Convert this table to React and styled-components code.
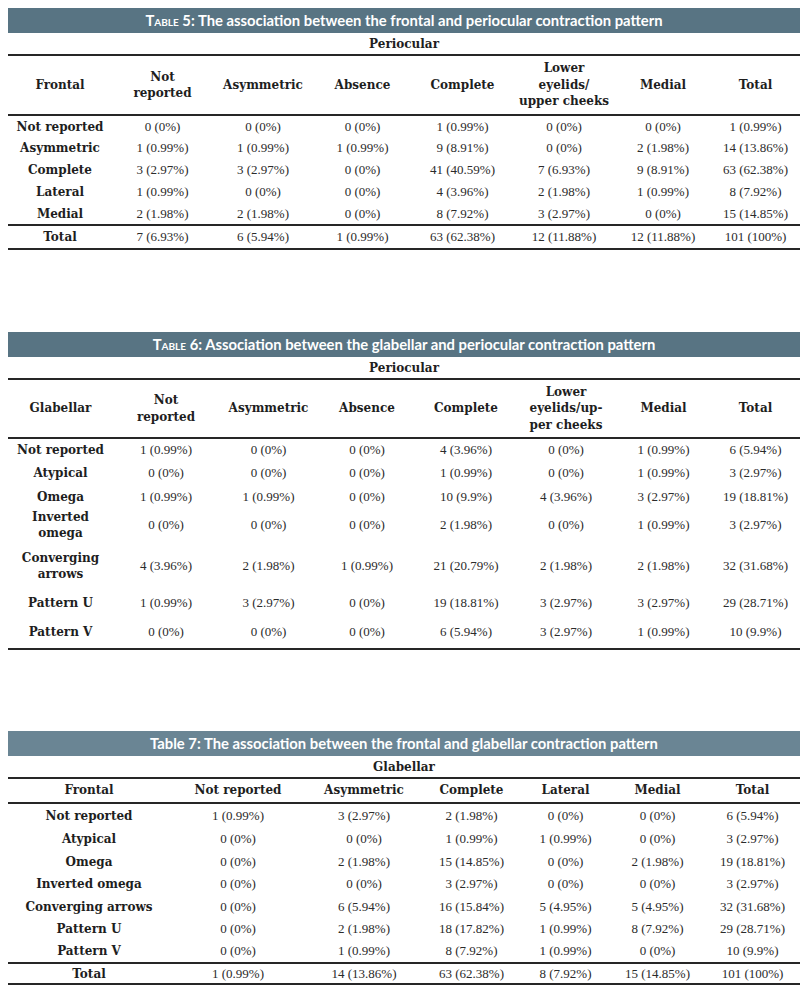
import React from "react";
import styled, { createGlobalStyle } from "styled-components";

const GlobalStyle = createGlobalStyle`
  body {
    margin: 0;
    background: #ffffff;
  }
`;

const Page = styled.div`
  width: 792px;
  padding: 8px 6px 0 8px;
  display: flex;
  flex-direction: column;
`;

const Block = styled.section`
  margin-top: ${(props) => props.$gap}px;
`;

const TitleBar = styled.div`
  height: 25px;
  line-height: 25px;
  background-color: ${(props) => props.$bg};
  color: #ffffff;
  font-family: Lato, "Open Sans", sans-serif;
  font-weight: 700;
  font-size: 14.8px;
  text-align: center;
  white-space: nowrap;
`;

const Lead = styled.span`
  font-variant: ${(props) => (props.$caps ? "small-caps" : "normal")};
`;

const Table = styled.table`
  width: 792px;
  border-collapse: collapse;
  table-layout: fixed;
  color: #1e1e1e;
`;

const GroupCell = styled.th`
  height: 21px;
  padding: 0;
  font-family: "DejaVu Serif", serif;
  font-weight: 700;
  font-size: 12px;
  text-align: center;
  border-bottom: 2px solid #262626;
`;

const HeadCell = styled.th`
  height: ${(props) => props.$h}px;
  padding: 0;
  font-family: "DejaVu Serif", serif;
  font-weight: 700;
  font-size: 12px;
  line-height: 16.5px;
  text-align: center;
  vertical-align: middle;
  border-bottom: 2px solid #262626;
`;

const Row = styled.tr`
  height: ${(props) => props.$h}px;
  border-top: ${(props) => (props.$total ? "2px solid #262626" : "none")};
  border-bottom: ${(props) => (props.$last ? "2px solid #262626" : "none")};
`;

const Label = styled.th`
  padding: 0;
  font-family: "DejaVu Serif", serif;
  font-weight: 700;
  font-size: 12px;
  line-height: 16px;
  text-align: center;
  vertical-align: middle;
`;

const Cell = styled.td`
  padding: 0;
  font-family: "Liberation Serif", serif;
  font-size: 13px;
  color: #2b2b2b;
  text-align: center;
  vertical-align: middle;
  white-space: nowrap;
`;

const tables = [
  {
    gap: 0,
    bg: "#587483",
    caps: true,
    lead: "Table 5:",
    title: "The association between the frontal and periocular contraction pattern",
    group: "Periocular",
    widths: [104, 101, 100, 99, 101, 102, 96, 89],
    headHeight: 58,
    head: [
      ["Frontal"],
      ["Not", "reported"],
      ["Asymmetric"],
      ["Absence"],
      ["Complete"],
      ["Lower", "eyelids/", "upper cheeks"],
      ["Medial"],
      ["Total"],
    ],
    rows: [
      { h: 22, label: ["Not reported"], cells: ["0 (0%)", "0 (0%)", "0 (0%)", "1 (0.99%)", "0 (0%)", "0 (0%)", "1 (0.99%)"] },
      { h: 22, label: ["Asymmetric"], cells: ["1 (0.99%)", "1 (0.99%)", "1 (0.99%)", "9 (8.91%)", "0 (0%)", "2 (1.98%)", "14 (13.86%)"] },
      { h: 22, label: ["Complete"], cells: ["3 (2.97%)", "3 (2.97%)", "0 (0%)", "41 (40.59%)", "7 (6.93%)", "9 (8.91%)", "63 (62.38%)"] },
      { h: 22, label: ["Lateral"], cells: ["1 (0.99%)", "0 (0%)", "0 (0%)", "4 (3.96%)", "2 (1.98%)", "1 (0.99%)", "8 (7.92%)"] },
      { h: 22, label: ["Medial"], cells: ["2 (1.98%)", "2 (1.98%)", "0 (0%)", "8 (7.92%)", "3 (2.97%)", "0 (0%)", "15 (14.85%)"] },
      { h: 24, total: true, last: true, label: ["Total"], cells: ["7 (6.93%)", "6 (5.94%)", "1 (0.99%)", "63 (62.38%)", "12 (11.88%)", "12 (11.88%)", "101 (100%)"] },
    ],
  },
  {
    gap: 82,
    bg: "#587483",
    caps: true,
    lead: "Table 6:",
    title: "Association between the glabellar and periocular contraction pattern",
    group: "Periocular",
    widths: [105, 106, 99, 98, 100, 100, 95, 89],
    headHeight: 57,
    head: [
      ["Glabellar"],
      ["Not", "reported"],
      ["Asymmetric"],
      ["Absence"],
      ["Complete"],
      ["Lower", "eyelids/up-", "per cheeks"],
      ["Medial"],
      ["Total"],
    ],
    rows: [
      { h: 23, label: ["Not reported"], cells: ["1 (0.99%)", "0 (0%)", "0 (0%)", "4 (3.96%)", "0 (0%)", "1 (0.99%)", "6 (5.94%)"] },
      { h: 24, label: ["Atypical"], cells: ["0 (0%)", "0 (0%)", "0 (0%)", "1 (0.99%)", "0 (0%)", "1 (0.99%)", "3 (2.97%)"] },
      { h: 23, label: ["Omega"], cells: ["1 (0.99%)", "1 (0.99%)", "0 (0%)", "10 (9.9%)", "4 (3.96%)", "3 (2.97%)", "19 (18.81%)"] },
      { h: 33, label: ["Inverted", "omega"], cells: ["0 (0%)", "0 (0%)", "0 (0%)", "2 (1.98%)", "0 (0%)", "1 (0.99%)", "3 (2.97%)"] },
      { h: 49, label: ["Converging", "arrows"], cells: ["4 (3.96%)", "2 (1.98%)", "1 (0.99%)", "21 (20.79%)", "2 (1.98%)", "2 (1.98%)", "32 (31.68%)"] },
      { h: 26, label: ["Pattern U"], cells: ["1 (0.99%)", "3 (2.97%)", "0 (0%)", "19 (18.81%)", "3 (2.97%)", "3 (2.97%)", "29 (28.71%)"] },
      { h: 33, last: true, label: ["Pattern V"], cells: ["0 (0%)", "0 (0%)", "0 (0%)", "6 (5.94%)", "3 (2.97%)", "1 (0.99%)", "10 (9.9%)"] },
    ],
  },
  {
    gap: 81,
    bg: "#6a8594",
    caps: false,
    lead: "Table 7:",
    title: "The association between the frontal and glabellar contraction pattern",
    group: "Glabellar",
    widths: [162, 136, 116, 99, 89, 95, 95],
    headHeight: 23,
    head: [
      ["Frontal"],
      ["Not reported"],
      ["Asymmetric"],
      ["Complete"],
      ["Lateral"],
      ["Medial"],
      ["Total"],
    ],
    rows: [
      { h: 24, label: ["Not reported"], cells: ["1 (0.99%)", "3 (2.97%)", "2 (1.98%)", "0 (0%)", "0 (0%)", "6 (5.94%)"] },
      { h: 23, label: ["Atypical"], cells: ["0 (0%)", "0 (0%)", "1 (0.99%)", "1 (0.99%)", "0 (0%)", "3 (2.97%)"] },
      { h: 23, label: ["Omega"], cells: ["0 (0%)", "2 (1.98%)", "15 (14.85%)", "0 (0%)", "2 (1.98%)", "19 (18.81%)"] },
      { h: 22, label: ["Inverted omega"], cells: ["0 (0%)", "0 (0%)", "3 (2.97%)", "0 (0%)", "0 (0%)", "3 (2.97%)"] },
      { h: 23, label: ["Converging arrows"], cells: ["0 (0%)", "6 (5.94%)", "16 (15.84%)", "5 (4.95%)", "5 (4.95%)", "32 (31.68%)"] },
      { h: 22, label: ["Pattern U"], cells: ["0 (0%)", "2 (1.98%)", "18 (17.82%)", "1 (0.99%)", "8 (7.92%)", "29 (28.71%)"] },
      { h: 23, label: ["Pattern V"], cells: ["0 (0%)", "1 (0.99%)", "8 (7.92%)", "1 (0.99%)", "0 (0%)", "10 (9.9%)"] },
      { h: 21, total: true, last: true, label: ["Total"], cells: ["1 (0.99%)", "14 (13.86%)", "63 (62.38%)", "8 (7.92%)", "15 (14.85%)", "101 (100%)"] },
    ],
  },
];

function Lines({ parts }) {
  return parts.map((part, i) => (
    <React.Fragment key={i}>
      {i > 0 && <br />}
      {part}
    </React.Fragment>
  ));
}

function ContractionTable({ data }) {
  return (
    <Block $gap={data.gap}>
      <TitleBar $bg={data.bg}>
        <Lead $caps={data.caps}>{data.lead}</Lead> {data.title}
      </TitleBar>
      <Table>
        <colgroup>
          {data.widths.map((w, i) => (
            <col key={i} style={{ width: w }} />
          ))}
        </colgroup>
        <thead>
          <tr>
            <GroupCell colSpan={data.widths.length}>{data.group}</GroupCell>
          </tr>
          <tr>
            {data.head.map((h, i) => (
              <HeadCell key={i} $h={data.headHeight}>
                <Lines parts={h} />
              </HeadCell>
            ))}
          </tr>
        </thead>
        <tbody>
          {data.rows.map((row, i) => (
            <Row key={i} $h={row.h} $total={row.total} $last={row.last}>
              <Label>
                <Lines parts={row.label} />
              </Label>
              {row.cells.map((c, j) => (
                <Cell key={j}>{c}</Cell>
              ))}
            </Row>
          ))}
        </tbody>
      </Table>
    </Block>
  );
}

function App() {
  return (
    <>
      <GlobalStyle />
      <Page>
        {tables.map((t) => (
          <ContractionTable key={t.lead} data={t} />
        ))}
      </Page>
    </>
  );
}

export default App;
